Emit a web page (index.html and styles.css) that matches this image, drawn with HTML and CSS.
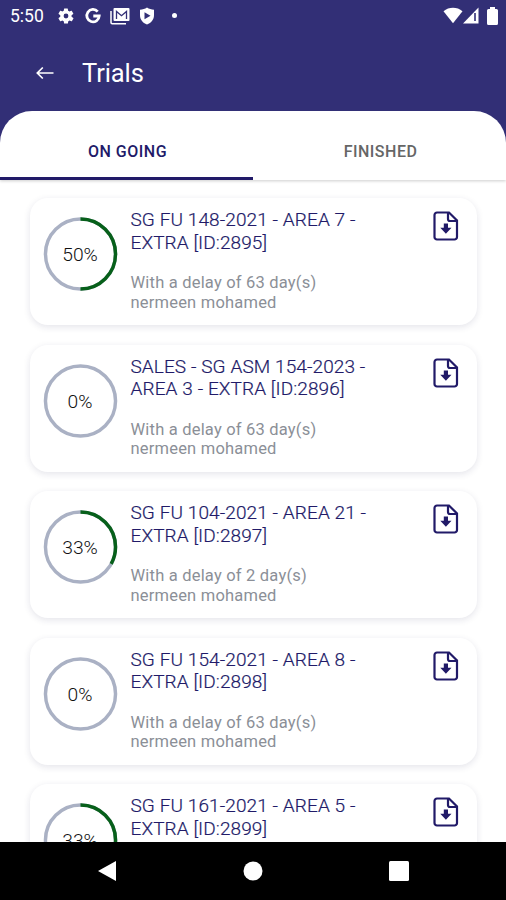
FILE: index.html
```html
<!DOCTYPE html>
<html lang="en">
<head>
  <meta charset="UTF-8">
  <meta name="viewport" content="width=device-width, initial-scale=1.0">
  <title>Trials</title>
  <link rel="stylesheet" href="styles.css">
</head>
<body>
  <svg class="sprite" width="0" height="0">
    <symbol id="file-download" viewBox="0 0 26 30">
      <path d="M4 1.500h12l8 8V26a2.500 2.500 0 0 1-2.500 2.500H4A2.500 2.500 0 0 1 1.500 26V4A2.500 2.500 0 0 1 4 1.500z" fill="none" stroke="currentColor" stroke-width="2.200"/>
      <path d="M15 1.500V8a2 2 0 0 0 2 2h7" fill="none" stroke="currentColor" stroke-width="2.200"/>
      <path d="M10.800 12.500h4.200v4.300h3.500L12.900 22.800 7.300 16.800h3.500z" fill="currentColor"/>
    </symbol>
  </svg>
  <div class="screen">
    <header class="top">
      <div class="status-bar">
        <span class="clock">5:50</span>
        <svg class="gear" width="18" height="18" viewBox="0 0 24 24"><path fill="currentColor" fill-rule="evenodd" d="M19.400 13a7.500 7.500 0 0 0 0-2l2.200-1.700a.5.5 0 0 0 .1-.6l-2.100-3.600a.5.5 0 0 0-.6-.2l-2.500 1a7.500 7.500 0 0 0-1.700-1l-.4-2.600a.5.5 0 0 0-.5-.4H9.900a.5.5 0 0 0-.5.400L9 4.900a7.500 7.500 0 0 0-1.700 1l-2.500-1a.5.5 0 0 0-.6.200L2.100 8.700a.5.5 0 0 0 .1.600L4.400 11a7.500 7.500 0 0 0 0 2l-2.200 1.700a.5.5 0 0 0-.1.600l2.100 3.600c.1.200.4.300.6.200l2.500-1a7.500 7.500 0 0 0 1.700 1l.4 2.600c0 .2.200.4.500.4h4.200c.3 0 .5-.2.500-.4l.4-2.600a7.500 7.500 0 0 0 1.700-1l2.500 1c.2.100.5 0 .6-.2l2.100-3.600a.5.5 0 0 0-.1-.6zM12 15.200a3.200 3.200 0 1 1 0-6.400 3.200 3.200 0 0 1 0 6.400z"/></svg>
        <svg class="google" width="18" height="18" viewBox="0 0 18 18"><path d="M13.700 4.600A6.200 6.200 0 1 0 15.200 9H9.300" fill="none" stroke="currentColor" stroke-width="2.800"/></svg>
        <svg class="mail" width="20" height="18" viewBox="0 0 20 18"><path d="M1 4v11.500a1.200 1.200 0 0 0 1.200 1.200H16" fill="none" stroke="currentColor" stroke-width="1.500"/><rect x="3.500" y="1" width="16" height="13" rx="1" fill="currentColor"/><path d="M6.500 12V4.500l5 4.200 5-4.200V12" fill="none" stroke="#322f76" stroke-width="1.300"/></svg>
        <svg class="shield" width="16" height="18" viewBox="0 0 16 18"><path d="M8 .5c2 1.400 4.500 2.100 7 2.200V8c0 4.600-2.600 7.700-7 9.500C3.600 15.700 1 12.600 1 8V2.700C3.500 2.600 6 1.900 8 .5z" fill="currentColor"/><path d="M5.500 5.300v7L11.500 8.800z" fill="#322f76"/></svg>
        <span class="dot"></span>
        <div class="signals">
          <svg width="20" height="17" viewBox="0 0 20 17"><path d="M.5 4.200C6-.3 14-.3 19.500 4.200L10 16.300z" fill="currentColor"/></svg>
          <svg width="16" height="17" viewBox="0 0 16 17"><path d="M15.500.5v16H0z" fill="currentColor"/><path d="M12 6v8" stroke="#322f76" stroke-width="1.600"/></svg>
          <svg class="battery" width="11" height="18" viewBox="0 0 11 18"><path d="M3 0h5v2h1.500A1.500 1.500 0 0 1 11 3.500v13A1.500 1.500 0 0 1 9.500 18h-8A1.500 1.500 0 0 1 0 16.500v-13A1.500 1.500 0 0 1 1.500 2H3z" fill="currentColor"/></svg>
        </div>
      </div>
      <div class="title-bar">
        <svg width="18" height="14" viewBox="0 0 18 14"><path d="M17.500 7H1.500M6.800 1.500L1.300 7l5.500 5.500" fill="none" stroke="currentColor" stroke-width="1.700"/></svg>
        <h1>Trials</h1>
      </div>
    </header>
    <main>
      <nav class="tabs">
        <a class="tab active">ON GOING</a>
        <a class="tab">FINISHED</a>
      </nav>
      <section class="list">
        <article class="card">
          <svg class="ring" viewBox="0 0 76 76">
            <circle class="track" cx="38" cy="38" r="35.500"/>
            <circle class="value" cx="38" cy="38" r="35.500" pathLength="100" stroke-dasharray="50 100" transform="rotate(-90 38 38)"/>
            <text x="37.500" y="45">50%</text>
          </svg>
          <div class="info">
            <h2>SG FU 148-2021 - AREA 7 - EXTRA [ID:2895]</h2>
            <p>With a delay of 63 day(s)</p>
            <p>nermeen mohamed</p>
          </div>
          <svg class="file"><use href="#file-download"/></svg>
        </article>
        <article class="card">
          <svg class="ring" viewBox="0 0 76 76">
            <circle class="track" cx="38" cy="38" r="35.500"/>
            <text x="37.500" y="45">0%</text>
          </svg>
          <div class="info">
            <h2>SALES - SG ASM 154-2023 - AREA 3 - EXTRA [ID:2896]</h2>
            <p>With a delay of 63 day(s)</p>
            <p>nermeen mohamed</p>
          </div>
          <svg class="file"><use href="#file-download"/></svg>
        </article>
        <article class="card">
          <svg class="ring" viewBox="0 0 76 76">
            <circle class="track" cx="38" cy="38" r="35.500"/>
            <circle class="value" cx="38" cy="38" r="35.500" pathLength="100" stroke-dasharray="33 100" transform="rotate(-90 38 38)"/>
            <text x="37.500" y="45">33%</text>
          </svg>
          <div class="info">
            <h2>SG FU 104-2021 - AREA 21 - EXTRA [ID:2897]</h2>
            <p>With a delay of 2 day(s)</p>
            <p>nermeen mohamed</p>
          </div>
          <svg class="file"><use href="#file-download"/></svg>
        </article>
        <article class="card">
          <svg class="ring" viewBox="0 0 76 76">
            <circle class="track" cx="38" cy="38" r="35.500"/>
            <text x="37.500" y="45">0%</text>
          </svg>
          <div class="info">
            <h2>SG FU 154-2021 - AREA 8 - EXTRA [ID:2898]</h2>
            <p>With a delay of 63 day(s)</p>
            <p>nermeen mohamed</p>
          </div>
          <svg class="file"><use href="#file-download"/></svg>
        </article>
        <article class="card">
          <svg class="ring" viewBox="0 0 76 76">
            <circle class="track" cx="38" cy="38" r="35.500"/>
            <circle class="value" cx="38" cy="38" r="35.500" pathLength="100" stroke-dasharray="33 100" transform="rotate(-90 38 38)"/>
            <text x="37.500" y="45">33%</text>
          </svg>
          <div class="info">
            <h2>SG FU 161-2021 - AREA 5 - EXTRA [ID:2899]</h2>
          </div>
          <svg class="file"><use href="#file-download"/></svg>
        </article>
      </section>
    </main>
    <footer class="nav-bar">
      <svg width="20" height="22" viewBox="0 0 20 22"><path d="M19 1v20L1 11z" fill="currentColor"/></svg>
      <svg width="20" height="20" viewBox="0 0 20 20"><circle cx="10" cy="10" r="9.500" fill="currentColor"/></svg>
      <svg width="20" height="20" viewBox="0 0 20 20"><rect width="20" height="20" rx="1.500" fill="currentColor"/></svg>
    </footer>
  </div>
</body>
</html>
```
FILE: styles.css
```css
* {
  box-sizing: border-box;
}

body {
  margin: 0;
  font-family: Roboto, sans-serif;
  background-color: #322f76;
}

.sprite {
  display: block;
}

.screen {
  display: flex;
  flex-direction: column;
  height: 900px;
  overflow: hidden;
}

.top {
  flex: none;
  height: 111px;
  color: #ffffff;
}

.status-bar {
  display: flex;
  align-items: center;
  height: 31px;
  padding-left: 10px;
  padding-right: 8px;
}

.clock {
  width: 47px;
  font-size: 17.5px;
}

.google {
  margin-left: 9px;
}

.mail {
  margin-left: 8px;
}

.shield {
  margin-left: 9px;
}

.dot {
  width: 5px;
  height: 5px;
  margin-left: 17px;
  border-radius: 50%;
  background-color: #ffffff;
}

.signals {
  display: flex;
  align-items: center;
  margin-left: auto;
}

.battery {
  margin-left: 8px;
}

.title-bar {
  display: flex;
  align-items: center;
  gap: 28px;
  height: 83px;
  padding-left: 36px;
}

.title-bar h1 {
  margin: 0;
  font-size: 25.5px;
  font-weight: 400;
  letter-spacing: -0.1px;
}

main {
  flex: 1;
  min-height: 0;
  overflow: hidden;
  background-color: #ffffff;
  border-radius: 32px 32px 0 0;
}

.tabs {
  display: flex;
  height: 69px;
  box-shadow: 0 1px 3px rgba(0, 0, 0, 0.2);
}

.tab {
  flex: 1;
  padding-top: 32px;
  padding-left: 2px;
  border-bottom: 3px solid transparent;
  text-align: center;
  font-size: 16px;
  font-weight: 500;
  line-height: 18px;
  letter-spacing: 0.5px;
  color: #666666;
}

.tab.active {
  border-color: #211a68;
  color: #211a68;
}

.list {
  display: flex;
  flex-direction: column;
  gap: 19.5px;
  padding: 18px 29px 0 30px;
}

.card {
  display: flex;
  flex: none;
  height: 127px;
  padding: 10px 18.5px 0 12.5px;
  border-radius: 18px;
  background-color: #ffffff;
  box-shadow: 0 2px 7px rgba(30, 30, 80, 0.12);
}

.ring {
  flex: none;
  width: 75px;
  height: 76px;
  margin-top: 8px;
}

.ring circle {
  fill: none;
  stroke-width: 3.5;
}

.ring .track {
  stroke: #aab1c4;
}

.ring .value {
  stroke: #07601a;
}

.ring text {
  font-size: 19.5px;
  font-weight: 300;
  text-anchor: middle;
  fill: #111111;
}

.info {
  width: 270px;
  margin-left: 13px;
}

.info h2 {
  margin: 1px 0 19px;
  font-size: 19px;
  font-weight: 300;
  line-height: 22.5px;
  letter-spacing: 0.1px;
  color: #211a68;
  -webkit-text-stroke: 0.2px;
}

.info p {
  margin: 0;
  font-size: 16.5px;
  line-height: 19.5px;
  letter-spacing: 0.2px;
  color: #8b8f97;
}

.file {
  flex: none;
  width: 26px;
  height: 30px;
  margin-top: 3px;
  margin-left: auto;
  color: #211a68;
}

.nav-bar {
  display: flex;
  flex: none;
  align-items: center;
  justify-content: center;
  gap: 126px;
  height: 58px;
  color: #ffffff;
  background-color: #000000;
}
```
